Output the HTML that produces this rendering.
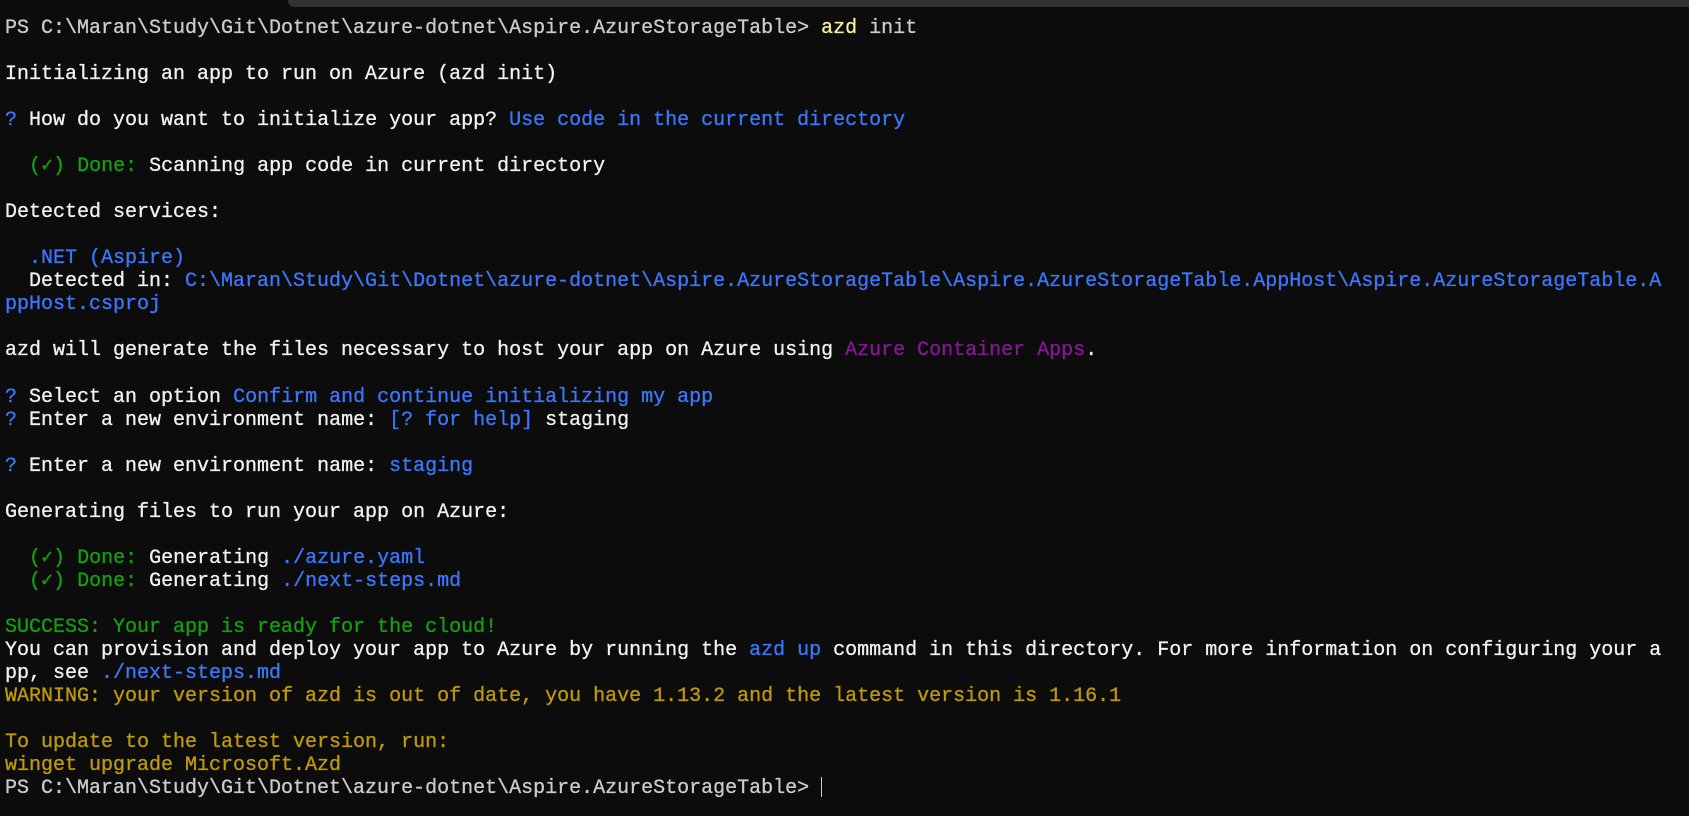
<!DOCTYPE html>
<html><head><meta charset="utf-8"><style>
html,body{margin:0;padding:0;background:#0c0c0c;width:1689px;height:816px;overflow:hidden}
.bar{position:absolute;left:288px;top:0;width:1401px;height:7px;background:#313131;border-radius:0 0 0 6px}
pre{position:absolute;left:5px;top:17px;margin:0;font-family:"Liberation Mono",monospace;font-size:20px;line-height:23.03px;color:#f2f2f2;font-weight:normal;-webkit-text-stroke:0.3px currentColor}
.g{color:#cccccc}
.b{color:#3b78ff}.gr{color:#13a10e}.p{color:#881798}.y{color:#c19c00}.yl{color:#f9f1a5}
.cur{display:inline-block;width:1px;height:20px;background:#cccccc;vertical-align:-4px}
</style></head><body>
<div class="bar"></div>
<pre><span class="g">PS C:\Maran\Study\Git\Dotnet\azure-dotnet\Aspire.AzureStorageTable&gt; </span><span class="yl">azd</span><span class="g"> init</span>

Initializing an app to run on Azure (azd init)

<span class="b">?</span> How do you want to initialize your app? <span class="b">Use code in the current directory</span>

  <span class="gr">(✓) Done:</span> Scanning app code in current directory

Detected services:

  <span class="b">.NET (Aspire)</span>
  Detected in: <span class="b">C:\Maran\Study\Git\Dotnet\azure-dotnet\Aspire.AzureStorageTable\Aspire.AzureStorageTable.AppHost\Aspire.AzureStorageTable.A</span>
<span class="b">ppHost.csproj</span>

azd will generate the files necessary to host your app on Azure using <span class="p">Azure Container Apps</span>.

<span class="b">?</span> Select an option <span class="b">Confirm and continue initializing my app</span>
<span class="b">?</span> Enter a new environment name: <span class="b">[? for help]</span> staging

<span class="b">?</span> Enter a new environment name: <span class="b">staging</span>

Generating files to run your app on Azure:

  <span class="gr">(✓) Done:</span> Generating <span class="b">./azure.yaml</span>
  <span class="gr">(✓) Done:</span> Generating <span class="b">./next-steps.md</span>

<span class="gr">SUCCESS: Your app is ready for the cloud!</span>
You can provision and deploy your app to Azure by running the <span class="b">azd up</span> command in this directory. For more information on configuring your a
pp, see <span class="b">./next-steps.md</span>
<span class="y">WARNING: your version of azd is out of date, you have 1.13.2 and the latest version is 1.16.1</span>

<span class="y">To update to the latest version, run:</span>
<span class="y">winget upgrade Microsoft.Azd</span>
<span class="g">PS C:\Maran\Study\Git\Dotnet\azure-dotnet\Aspire.AzureStorageTable&gt; </span><span class="cur"></span></pre>
</body></html>
